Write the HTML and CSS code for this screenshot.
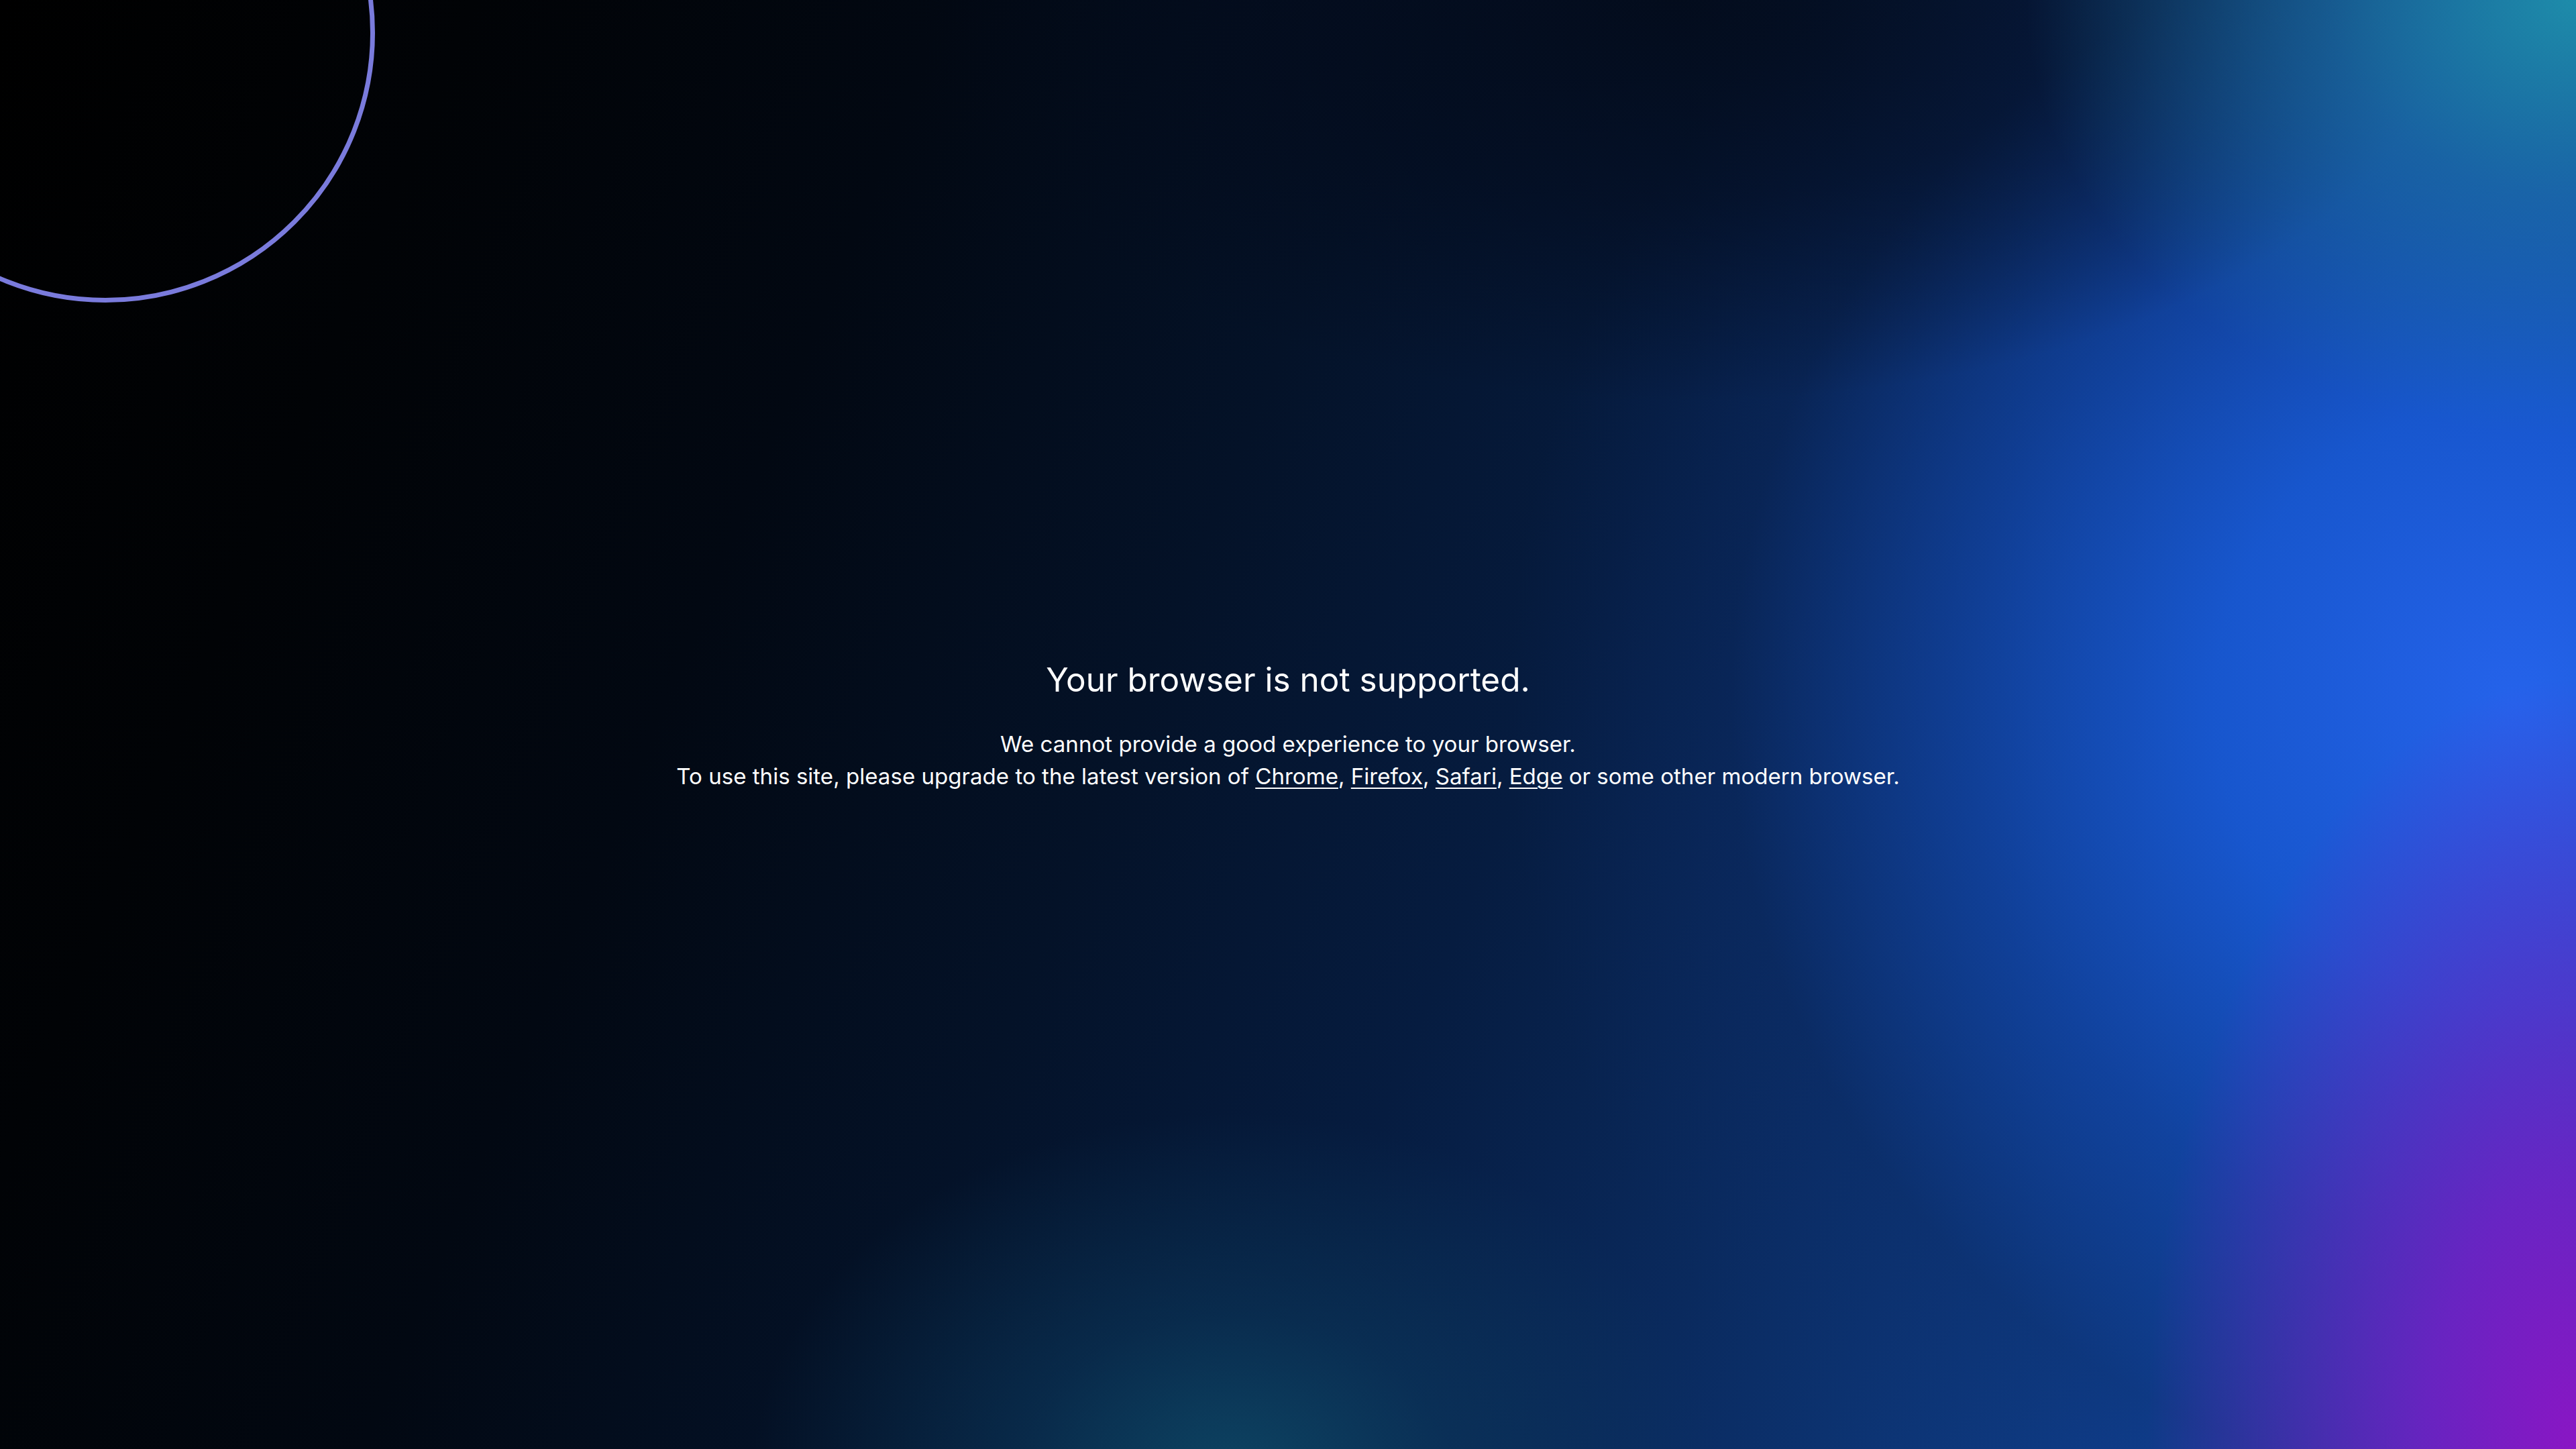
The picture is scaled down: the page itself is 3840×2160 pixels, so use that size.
FILE: index.html
```html
<!DOCTYPE html>
<html lang="en">
<head>
<meta charset="utf-8">
<title>Your browser is not supported</title>
<link rel="stylesheet" href="styles.css">
</head>
<body>
<div class="page">
  <div class="ring"></div>
  <main class="message">
    <h1 class="title">Your browser is not supported.</h1>
    <p class="text">We cannot provide a good experience to your browser.<br>To use this site, please upgrade to the latest version of <a href="#" class="link">Chrome</a>, <a href="#" class="link">Firefox</a>, <a href="#" class="link">Safari</a>, <a href="#" class="link">Edge</a> or some other modern browser.</p>
  </main>
</div>
</body>
</html>
```

FILE: styles.css
```css
html, body {
  margin: 0;
  padding: 0;
  width: 100%;
  height: 100%;
  overflow: hidden;
}

body {
  font-family: "Inter", "Open Sans", sans-serif;
  color: #ffffff;
  background: #000;
}

.page {
  position: relative;
  width: 3840px;
  height: 2160px;
  overflow: hidden;
  display: flex;
  align-items: center;
  justify-content: center;
  background:
    radial-gradient(ellipse 640px 1150px at 3840px 2160px, rgba(138, 22, 196, 1) 0%, rgba(125, 28, 200, 0.8) 35%, rgba(90, 50, 210, 0) 100%),
    radial-gradient(ellipse 820px 650px at 3840px 0px, rgba(30, 140, 170, 1) 0%, rgba(30, 120, 170, 0.6) 45%, rgba(25, 90, 160, 0) 100%),
    radial-gradient(ellipse 1150px 600px at 2500px 0px, rgba(3, 10, 24, 0.85) 0%, rgba(3, 10, 26, 0.55) 50%, rgba(3, 10, 26, 0) 100%),
    radial-gradient(ellipse 720px 540px at 1840px 2200px, rgba(14, 72, 102, 0.9) 0%, rgba(12, 60, 95, 0.5) 45%, rgba(10, 40, 80, 0) 100%),
    radial-gradient(ellipse 1500px 1500px at 3750px 1050px, rgba(37, 99, 235, 1) 0%, rgba(24, 88, 210, 0.95) 30%, rgba(18, 70, 170, 0.7) 55%, rgba(12, 45, 110, 0.3) 78%, rgba(8, 30, 80, 0) 100%),
    linear-gradient(112deg, #000000 0%, #010306 15%, #020812 30%, #041228 45%, #061c40 58%, #0a2a5e 70%, #0e3a80 82%, #1450c0 100%);
}

.ring {
  position: absolute;
  left: -245px;
  top: -353px;
  width: 804px;
  height: 804px;
  box-sizing: border-box;
  border: 7px solid #7a7bdc;
  border-radius: 50%;
}

.message {
  position: relative;
  text-align: center;
  padding-top: 4px;
}

.title {
  margin: 0 0 42px;
  font-size: 49.5px;
  font-weight: 400;
  line-height: 60px;
  letter-spacing: 0;
}

.text {
  margin: 0;
  font-size: 33.1px;
  font-weight: 400;
  line-height: 48px;
}

.link {
  color: #ffffff;
  text-decoration: underline;
  text-decoration-thickness: 2px;
  text-underline-offset: 5px;
}
```
